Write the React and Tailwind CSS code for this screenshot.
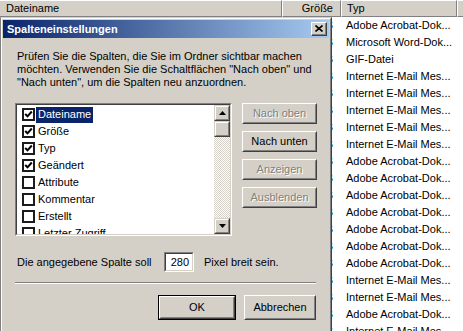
import React from "react";

const types = [
  "Adobe Acrobat-Dok...",
  "Microsoft Word-Dok...",
  "GIF-Datei",
  "Internet E-Mail Mes...",
  "Internet E-Mail Mes...",
  "Internet E-Mail Mes...",
  "Internet E-Mail Mes...",
  "Internet E-Mail Mes...",
  "Adobe Acrobat-Dok...",
  "Adobe Acrobat-Dok...",
  "Adobe Acrobat-Dok...",
  "Adobe Acrobat-Dok...",
  "Adobe Acrobat-Dok...",
  "Adobe Acrobat-Dok...",
  "Adobe Acrobat-Dok...",
  "Internet E-Mail Mes...",
  "Internet E-Mail Mes...",
  "Adobe Acrobat-Dok...",
  "Internet E-Mail Mes...",
];

const columns = [
  { label: "Dateiname", on: true },
  { label: "Größe", on: true },
  { label: "Typ", on: true },
  { label: "Geändert", on: true },
  { label: "Attribute", on: false },
  { label: "Kommentar", on: false },
  { label: "Erstellt", on: false },
  { label: "Letzter Zugriff", on: false },
];

function Btn({ children, disabled, isDefault, className = "" }) {
  return (
    <div className={`${isDefault ? "border border-black" : ""} ${className}`}>
      <div className="h-full border border-t-white border-l-white border-r-[#404040] border-b-[#404040] bg-[#d4d0c8]">
        <div className="h-full flex items-center justify-center border border-t-[#d4d0c8] border-l-[#d4d0c8] border-r-[#808080] border-b-[#808080]">
          <span className={disabled ? "text-[#808080] [text-shadow:1px_1px_0_#fff]" : "text-black"}>
            {children}
          </span>
        </div>
      </div>
    </div>
  );
}

function Check({ on }) {
  return (
    <span className="w-[13px] h-[13px] shrink-0 border-2 border-[#1c1c1c] bg-white flex items-center justify-center">
      {on && (
        <svg width="9" height="9" viewBox="0 0 9 9">
          <path d="M1.2 4 L3.5 6.3 L7.8 1.5" stroke="#000" strokeWidth="2" fill="none" />
        </svg>
      )}
    </span>
  );
}

function ScrollBtn({ down }) {
  return (
    <div className="w-[16px] h-[16px] border border-t-[#d4d0c8] border-l-[#d4d0c8] border-r-[#404040] border-b-[#404040] bg-[#d4d0c8]">
      <div className="h-full flex items-center justify-center border border-t-white border-l-white border-r-[#808080] border-b-[#808080]">
        <svg width="7" height="4" viewBox="0 0 7 4">
          <path d={down ? "M0 0 H7 L3.5 4 Z" : "M0 4 H7 L3.5 0 Z"} fill="#000" />
        </svg>
      </div>
    </div>
  );
}

export default function App() {
  return (
    <div className="relative w-[463px] h-[331px] overflow-hidden bg-white font-['Liberation_Sans',Arial,sans-serif] text-[11px] text-black leading-none">
      {/* EXPLORER HEADER */}
      <div className="flex h-[17px] bg-[#d4d0c8]">
        <div className="w-[282px] flex items-center pl-[6px] border-r border-b border-r-[#808080] border-b-[#808080] border-t border-t-white">
          Dateiname
        </div>
        <div className="w-[59px] flex items-center justify-end pr-[7px] border-r border-b border-r-[#808080] border-b-[#808080] border-t border-t-white border-l border-l-white">
          Größe
        </div>
        <div className="w-[116px] flex items-center pl-[5px] border-r border-b border-r-[#808080] border-b-[#808080] border-t border-t-white border-l border-l-white">
          Typ
        </div>
        <div className="flex-1 border-b border-b-[#808080] border-t border-t-white border-l border-l-white" />
      </div>

      {/* EXPLORER ROWS */}
      <div className="flex flex-col">
        {types.map((t, i) => (
          <div key={i} className="flex h-[17px] items-center">
            <div className="w-[282px]" />
            <div className="w-[59px] text-right pr-[8px]">12 KB</div>
            <div className="pl-[5px] whitespace-nowrap">{t}</div>
          </div>
        ))}
      </div>

      {/* DIALOG */}
      <div className="absolute left-0 top-[17px] w-[332px] h-[320px] border border-t-[#d4d0c8] border-l-[#808080] border-r-[#404040] border-b-[#404040] bg-[#d4d0c8]">
        <div className="h-full border border-t-white border-l-white border-r-[#808080] border-b-[#808080] p-[1px] flex flex-col">
          {/* TITLE BAR */}
          <div className="h-[18px] flex items-center justify-between pl-[4px] pr-[2px] bg-[linear-gradient(to_right,#0a246a,#a6caf0)]">
            <span className="text-white font-bold">Spalteneinstellungen</span>
            <div className="w-[16px] h-[14px] border border-t-white border-l-white border-r-[#404040] border-b-[#404040] bg-[#d4d0c8]">
              <div className="h-full flex items-center justify-center border-r border-b border-r-[#808080] border-b-[#808080]">
                <svg width="8" height="7" viewBox="0 0 8 7">
                  <path d="M0.5 0.5 L7.5 6.5 M7.5 0.5 L0.5 6.5" stroke="#000" strokeWidth="1.6" />
                </svg>
              </div>
            </div>
          </div>

          {/* BODY */}
          <div className="px-[12px] flex flex-col">
            <p className="mt-[12px] pl-[2px] leading-[13px]">
              Prüfen Sie die Spalten, die Sie im Ordner sichtbar machen
              <br />
              möchten. Verwenden Sie die Schaltflächen "Nach oben" und
              <br />
              "Nach unten", um die Spalten neu anzuordnen.
            </p>

            <div className="flex mt-[14px] gap-[10px]">
              {/* LISTBOX */}
              <div className="w-[220px] h-[133px] border border-t-[#808080] border-l-[#808080] border-r-white border-b-white">
                <div className="h-full flex border border-t-[#404040] border-l-[#404040] border-r-[#d4d0c8] border-b-[#d4d0c8] bg-white">
                  <div className="flex-1 overflow-hidden pt-[1px]">
                    {columns.map((c, i) => (
                      <div key={i} className="h-[17px] flex items-center pl-[5px]">
                        <Check on={c.on} />
                        <span
                          className={`ml-[1px] px-[2px] h-[16px] flex items-center whitespace-nowrap ${
                            i === 0 ? "bg-[#0a246a] text-white" : ""
                          }`}
                        >
                          {c.label}
                        </span>
                      </div>
                    ))}
                  </div>
                  <div className="w-[16px] flex flex-col bg-[repeating-conic-gradient(#d4d0c8_0%_25%,#ffffff_0%_50%)] bg-[length:2px_2px]">
                    <ScrollBtn />
                    <div className="w-[16px] h-[16px] border border-t-[#d4d0c8] border-l-[#d4d0c8] border-r-[#404040] border-b-[#404040] bg-[#d4d0c8]">
                      <div className="h-full border border-t-white border-l-white border-r-[#808080] border-b-[#808080]" />
                    </div>
                    <div className="flex-1" />
                    <ScrollBtn down />
                  </div>
                </div>
              </div>

              {/* SIDE BUTTONS */}
              <div className="flex flex-col gap-[7px]">
                <Btn disabled className="w-[75px] h-[21px]">Nach oben</Btn>
                <Btn className="w-[75px] h-[21px]">Nach unten</Btn>
                <Btn disabled className="w-[75px] h-[21px]">Anzeigen</Btn>
                <Btn disabled className="w-[75px] h-[21px]">Ausblenden</Btn>
              </div>
            </div>

            {/* WIDTH ROW */}
            <div className="flex items-center mt-[16px] pl-[2px]">
              <span className="w-[147px]">Die angegebene Spalte soll</span>
              <div className="w-[30px] h-[20px] border border-t-[#808080] border-l-[#808080] border-r-white border-b-white">
                <div className="h-full flex items-center justify-end pr-[3px] border border-t-[#404040] border-l-[#404040] border-r-[#d4d0c8] border-b-[#d4d0c8] bg-white">
                  280
                </div>
              </div>
              <span className="ml-[10px]">Pixel breit sein.</span>
            </div>

            {/* SEPARATOR */}
            <div className="mt-[10px] mr-[1px] border-t border-t-[#808080] border-b border-b-white" />

            {/* OK / CANCEL */}
            <div className="flex justify-end gap-[8px] mt-[11px] mr-[1px]">
              <Btn isDefault className="w-[78px] h-[25px]">OK</Btn>
              <Btn className="w-[72px] h-[25px]">Abbrechen</Btn>
            </div>
          </div>
        </div>
      </div>
    </div>
  );
}
